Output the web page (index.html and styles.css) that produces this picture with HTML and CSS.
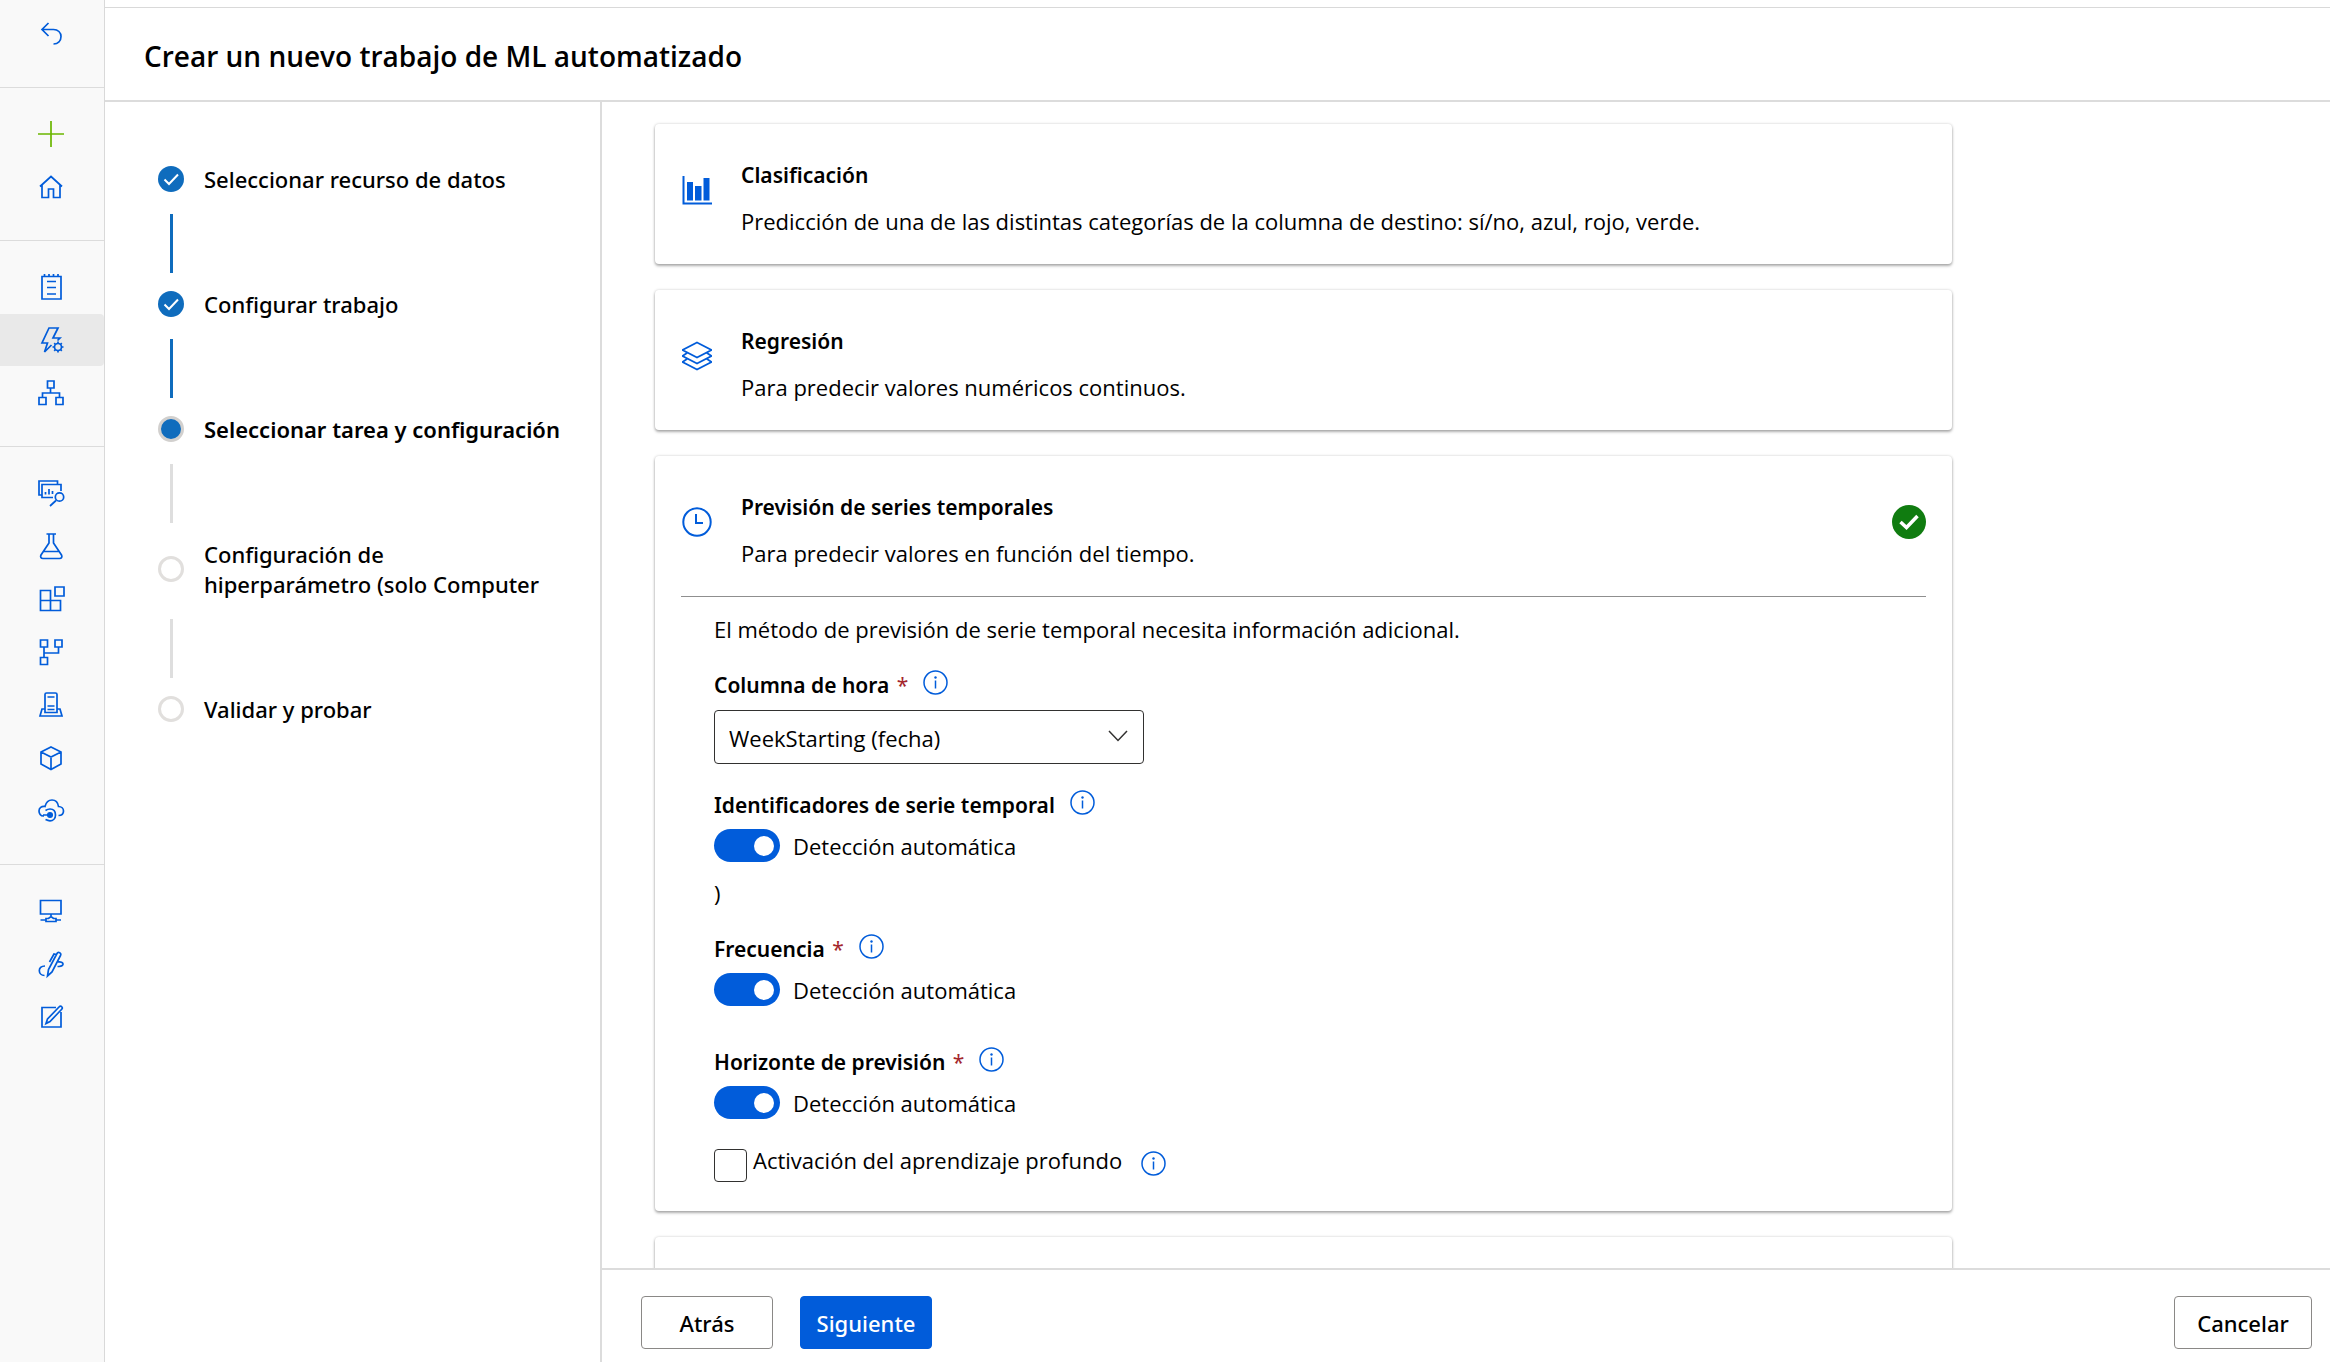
FILE: index.html
```
<!DOCTYPE html>
<html lang="es">
<head>
<meta charset="utf-8">
<meta name="viewport" content="width=device-width, initial-scale=1">
<title>Crear un nuevo trabajo de ML automatizado</title>
<link rel="stylesheet" href="styles.css">
</head>
<body>
<svg class="defs" aria-hidden="true">
  <symbol id="info" viewBox="0 0 25 25">
    <circle cx="12.5" cy="12.5" r="11.5" fill="none" stroke="currentColor" stroke-width="1.5"/>
    <path d="M12.5 10.5v8" fill="none" stroke="currentColor" stroke-width="1.5"/>
    <circle cx="12.5" cy="7.5" r="1.2" fill="currentColor"/>
  </symbol>
</svg>
<div class="app">
  <nav class="rail" aria-label="Navegación">
    <div class="rail-group rail-group-top">
      <a class="rail-item" href="#" aria-label="Volver"><svg viewBox="0 0 26 26"><path d="M10.500 2 L4 8.500 L10.500 15 M4 8.500 H15.500 C20 8.500 23 11.500 23 15.500 C23 20 20 23 15.500 23"/></svg></a>
    </div>
    <div class="rail-group">
      <a class="rail-item rail-item-new" href="#" aria-label="Nuevo"><svg viewBox="0 0 26 26"><path d="M13 0V26M0 13H26"/></svg></a>
      <a class="rail-item" href="#" aria-label="Inicio"><svg viewBox="0 0 26 26"><path d="M2 12.500 L13 2.500 L24 12.500 M4 11V23.500H10.500V15H15.500V23.500H22V11"/></svg></a>
    </div>
    <div class="rail-group">
      <a class="rail-item" href="#" aria-label="Cuadernos"><svg viewBox="0 0 26 26"><path d="M4 2.500H23V25H4ZM6.500 0V2.500M11 0V2.500M15.500 0V2.500M20 0V2.500M9 7.500H18M9 13.500H18M9 20H18"/></svg></a>
      <a class="rail-item rail-item-active" href="#" aria-label="ML automatizado" aria-current="page"><svg viewBox="0 0 26 26"><path d="M13.500 18 L6.500 25 L9.500 16 H4 L11 1 H20 L15 11 H22 L19.500 13.500"/><circle cx="20" cy="20" r="3.500"/><path d="M20 14.500V16.500M20 23.500V25.500M14.500 20H16.500M23.500 20H25.500M16.200 16.200L17.500 17.500M22.500 22.500L23.800 23.800M16.200 23.800L17.500 22.500M22.500 17.500L23.800 16.200"/></svg></a>
      <a class="rail-item" href="#" aria-label="Diseñador"><svg viewBox="0 0 26 26"><path d="M9.500 1H16V8H9.500ZM1 17.500H8V24.500H1ZM18 17.500H25V24.500H18ZM12.500 8V13M4.500 17.500V13H21.500V17.500"/></svg></a>
    </div>
    <div class="rail-group">
      <a class="rail-item" href="#" aria-label="Datos"><svg viewBox="0 0 26 26"><path d="M4 15H1V1H19.500V4M15 17.500H4V4.500H23V11M7.500 14.500V12M11 14.500V9M14.500 14V11M18 20.500L12 26"/><circle cx="21.500" cy="17" r="4.200"/></svg></a>
      <a class="rail-item" href="#" aria-label="Trabajos"><svg viewBox="0 0 26 26"><path d="M8.500 1H18M11 1V10L3 22C2 24 3 25.500 5 25.500H21.500C23.500 25.500 24.500 24 23.500 22L15.500 10V1M6 18.500H21"/></svg></a>
      <a class="rail-item" href="#" aria-label="Componentes"><svg viewBox="0 0 26 26"><path d="M2.500 4.500H12.500V24.500H2.500ZM2.500 14.500H22.500V24.500H12.500V14.500M17 1H26V10H17Z"/></svg></a>
      <a class="rail-item" href="#" aria-label="Canalizaciones"><svg viewBox="0 0 26 26"><path d="M2.500 1H9.500V8H2.500ZM17 1H24V8H17ZM2.500 18.500H9.500V25.500H2.500ZM6 8V18.500M6 14H20.500V8"/></svg></a>
      <a class="rail-item" href="#" aria-label="Entornos"><svg viewBox="0 0 26 26"><path d="M7 20.500V2.500Q7 1 8.500 1H17.500Q19 1 19 2.500V20.500ZM7 17H4L2 24H24L22 17H19M9.500 5H16.500M9.500 14H16.500M9.500 17.500H16.500"/></svg></a>
      <a class="rail-item" href="#" aria-label="Modelos"><svg viewBox="0 0 26 26"><path d="M13 2L23 7V19L13 24.500L3 19V7ZM3 7L13 12L23 7M13 12V24.500"/></svg></a>
      <a class="rail-item" href="#" aria-label="Puntos de conexión"><svg viewBox="0 0 26 26"><path d="M6 18H5.500C2.500 18 1 15.500 1 13C1 10 3.500 8 7 8.500C8 4.500 10.500 2 14 2C18 2 20 5 20.500 8.500C23.500 8.500 25.500 10.500 25.500 13C25.500 15.500 24 17.500 20.500 17.500M7.500 12.500C9 11.500 10 11 12 11C15.500 11 17.500 13.500 17.500 17C17.500 20.500 15 22.800 12 22.800C10 22.800 8.500 22 7.500 21.500M5 17H12"/><circle class="solid" cx="12" cy="17" r="2.200"/></svg></a>
    </div>
    <div class="rail-group">
      <a class="rail-item" href="#" aria-label="Proceso"><svg viewBox="0 0 26 26"><path d="M2.500 2.500H23V16H2.500ZM13 16V19M2.500 22H8M18 22H23M8 20.500H10.500L13 18.500L15.500 20.500H18V23.500H8Z"/></svg></a>
      <a class="rail-item" href="#" aria-label="Servicios vinculados"><svg viewBox="0 0 26 26"><path d="M9.500 25L10.500 18.500L19 2.500C20 .500 24 2 22.500 4.500L14 21ZM18.500 3.500L16 3L11.500 11M6.500 24.500C0 24.500 -1 15 7 15M20 11C26 10.500 27 15 21 15.500H19.500"/></svg></a>
      <a class="rail-item" href="#" aria-label="Etiquetado de datos"><svg viewBox="0 0 26 26"><path d="M18 3.500H4V23H23V8M8 19.500L9.500 15L21 3C23 1 25.500 3.500 23.500 5.500L12 17.500Z"/></svg></a>
    </div>
  </nav>

  <main class="main">
    <header class="header"><h1>Crear un nuevo trabajo de ML automatizado</h1></header>
    <div class="workspace">
      <ol class="steps">
        <li class="step step-done"><span class="marker"><svg viewBox="0 0 26 26"><path d="M6.500 13.500L11 18L20 8.500"/></svg></span><span>Seleccionar recurso de datos</span></li>
        <li class="step step-done"><span class="marker"><svg viewBox="0 0 26 26"><path d="M6.500 13.500L11 18L20 8.500"/></svg></span><span>Configurar trabajo</span></li>
        <li class="step step-current" aria-current="step"><span class="marker"></span><span>Seleccionar tarea y configuración</span></li>
        <li class="step"><span class="marker"></span><span>Configuración de<br>hiperparámetro (solo Computer</span></li>
        <li class="step"><span class="marker"></span><span>Validar y probar</span></li>
      </ol>

      <div class="content">
        <div class="cards">
          <section class="card">
            <div class="card-head">
              <svg class="card-icon" viewBox="0 0 30 30" aria-hidden="true"><path d="M1.500 1V28.500H30" fill="none" stroke="currentColor" stroke-width="2"/><path d="M5 7H11V25.500H5ZM13 11H19.500V25.500H13ZM21.500 3H27.500V25.500H21.500Z" fill="currentColor"/></svg>
              <div class="card-text"><h2>Clasificación</h2><p>Predicción de una de las distintas categorías de la columna de destino: sí/no, azul, rojo, verde.</p></div>
            </div>
          </section>
          <section class="card">
            <div class="card-head">
              <svg class="card-icon" viewBox="0 0 30 30" aria-hidden="true"><path d="M15 1.500L29.500 9L15 16.500L.500 9ZM5 12L.500 15L15 22.500L29.500 15L25 12M5 18L.500 21L15 28.500L29.500 21L25 18" fill="none" stroke="currentColor" stroke-width="1.800"/></svg>
              <div class="card-text"><h2>Regresión</h2><p>Para predecir valores numéricos continuos.</p></div>
            </div>
          </section>
          <section class="card card-selected">
            <div class="card-head">
              <svg class="card-icon" viewBox="0 0 30 30" aria-hidden="true"><circle cx="15" cy="15" r="13.700" fill="none" stroke="currentColor" stroke-width="2"/><path d="M14 7V16H21" fill="none" stroke="currentColor" stroke-width="2"/></svg>
              <div class="card-text"><h2>Previsión de series temporales</h2><p>Para predecir valores en función del tiempo.</p></div>
              <svg class="card-check" viewBox="0 0 34 34" role="img" aria-label="Seleccionado"><circle cx="17" cy="17" r="17" fill="#107c10"/><path d="M8.500 17L14.500 22.500L25.500 11" fill="none" stroke="#fff" stroke-width="3.500"/></svg>
            </div>
            <form class="settings">
              <p class="intro">El método de previsión de serie temporal necesita información adicional.</p>
              <div class="field">
                <div class="label-row"><label for="time-column">Columna de hora <span class="required">*</span></label><svg class="info"><use href="#info"/></svg></div>
                <div class="select-box">
                  <select id="time-column"><option>WeekStarting (fecha)</option></select>
                  <svg class="chevron" viewBox="0 0 20 14" aria-hidden="true"><path d="M1 2L10 11.500L19 2"/></svg>
                </div>
              </div>
              <div class="field">
                <div class="label-row"><span id="ids">Identificadores de serie temporal</span><svg class="info"><use href="#info"/></svg></div>
                <label class="toggle-row"><input class="toggle" type="checkbox" role="switch" aria-describedby="ids" checked>Detección automática</label>
                <p class="note">)</p>
              </div>
              <div class="field field-spaced">
                <div class="label-row"><span id="freq">Frecuencia <span class="required">*</span></span><svg class="info"><use href="#info"/></svg></div>
                <label class="toggle-row"><input class="toggle" type="checkbox" role="switch" aria-describedby="freq" checked>Detección automática</label>
              </div>
              <div class="field">
                <div class="label-row"><span id="horizon">Horizonte de previsión <span class="required">*</span></span><svg class="info"><use href="#info"/></svg></div>
                <label class="toggle-row"><input class="toggle" type="checkbox" role="switch" aria-describedby="horizon" checked>Detección automática</label>
              </div>
              <div class="check-row"><input class="check" type="checkbox" id="deep"><label for="deep">Activación del aprendizaje profundo</label><svg class="info"><use href="#info"/></svg></div>
            </form>
          </section>
          <section class="card"></section>
        </div>
        <footer class="footer">
          <button class="button" type="button">Atrás</button>
          <button class="button button-primary" type="button">Siguiente</button>
          <button class="button button-cancel" type="button">Cancelar</button>
        </footer>
      </div>
    </div>
  </main>
</div>
</body>
</html>
```
FILE: styles.css
```
:root {
  --blue: #015cda;
  --line: #d9d9d9;
  --strong: "Noto Sans", "Open Sans", sans-serif;
}

* { box-sizing: border-box; }

body {
  margin: 0;
  background: #fff;
  color: #000;
  font: 400 22px/30px "Open Sans", "Noto Sans", sans-serif;
}

h1, h2, p, ol { margin: 0; padding: 0; }

.defs { position: absolute; width: 0; height: 0; }

.app { display: flex; height: 100vh; overflow: hidden; }

/* Icon rail */
.rail {
  flex: none;
  width: 105px;
  background: #f9f9f9;
  border-right: 1px solid var(--line);
}

.rail-group {
  display: flex;
  flex-direction: column;
  gap: 1px;
  padding: 20px 0 27px;
  border-top: 1px solid #dcdcdc;
}

.rail-group-top { padding-top: 8px; border-top: 0; }

.rail-item {
  display: flex;
  align-items: center;
  justify-content: center;
  height: 52px;
  padding-right: 3px;
  color: var(--blue);
}

.rail-item-new { color: #6bb700; }
.rail-item-active { background: #e9e9e9; border-radius: 0 4px 4px 0; }

.rail-item svg {
  width: 26px;
  height: 26px;
  overflow: visible;
  fill: none;
  stroke: currentColor;
  stroke-width: 1.7;
}

.rail-item .solid { fill: currentColor; }

/* Header */
.main { flex: 1; min-width: 0; display: flex; flex-direction: column; padding-top: 7px; }

.header {
  padding: 28px 39px 24px;
  border-top: 1px solid var(--line);
  border-bottom: 2px solid #dcdcdc;
}

.header h1 { font: 600 28px/40px "Open Sans", "Noto Sans", sans-serif; }

.workspace { flex: 1; min-height: 0; display: flex; }

/* Wizard steps */
.steps {
  flex: none;
  width: 497px;
  padding: 62px 20px 0 53px;
  border-right: 2px solid #dcdcdc;
  list-style: none;
  font-family: var(--strong);
  font-weight: 500;
}

.step { display: grid; grid-template-columns: 26px 1fr; column-gap: 20px; align-items: center; }

.step:not(:last-child)::after {
  content: "";
  width: 3px;
  height: 59px;
  margin: 20px 0 16px;
  justify-self: center;
  background: #dedede;
}

.step-done:not(:last-child)::after { background: #0f6cbd; }

.marker { width: 26px; height: 26px; border: 3px solid #e1dfdd; border-radius: 50%; }

.step-done .marker { border: 0; background: #0f6cbd; }
.step-done svg { display: block; fill: none; stroke: #fff; stroke-width: 2; }

.step-current { font-weight: 600; }
.step-current .marker { border-color: #d2d0ce; background: #0f6cbd; }

/* Task cards */
.content { flex: 1; min-width: 0; display: flex; flex-direction: column; }

.cards {
  flex: 1;
  min-height: 0;
  display: flex;
  flex-direction: column;
  gap: 26px;
  padding: 22px 53px 0;
  overflow: hidden;
}

.card {
  flex: none;
  width: 100%;
  max-width: 1297px;
  min-height: 140px;
  padding: 0 26px;
  border-radius: 4px;
  box-shadow: 0 2px 3px rgba(0, 0, 0, .3), 0 0 3px rgba(0, 0, 0, .18);
}

.card-head { display: flex; padding: 36px 0 28px; }
.card-icon { flex: none; width: 30px; height: 30px; margin: 15px 29px 0 1px; color: var(--blue); }
.card-text { flex: 1; display: grid; gap: 16px; }
.card-text h2 { font: 600 21px/30px var(--strong); }
.card-check { flex: none; width: 34px; height: 34px; margin-top: 13px; }

/* Forecast settings */
.settings { padding: 17px 33px 29px; border-top: 1px solid #8f8f8f; }

.field { padding-bottom: 26px; }
.field-spaced { padding-bottom: 41px; }
.intro { padding-bottom: 26px; }

.label-row {
  display: flex;
  gap: 15px;
  align-items: flex-start;
  font: 600 21px/30px var(--strong);
}

.required { padding-left: 2px; color: #a4262c; font-weight: 400; }
.info { flex: none; width: 25px; height: 25px; color: var(--blue); }

.select-box { position: relative; width: 430px; margin-top: 10px; }

.select-box select {
  display: block;
  width: 100%;
  height: 54px;
  padding: 2px 40px 0 14px;
  border: 1px solid #323130;
  border-radius: 4px;
  appearance: none;
  background: #fff;
  color: #000;
  font: inherit;
}

.chevron {
  position: absolute;
  right: 16px;
  top: 19px;
  width: 20px;
  height: 14px;
  fill: none;
  stroke: #323130;
  stroke-width: 1.5;
  pointer-events: none;
}

.toggle-row { display: flex; gap: 13px; align-items: center; padding-top: 9px; }

.toggle {
  flex: none;
  display: flex;
  align-items: center;
  justify-content: flex-end;
  width: 66px;
  height: 33px;
  margin: 0;
  padding-right: 6px;
  border-radius: 17px;
  appearance: none;
  background: var(--blue);
}

.toggle::before { content: ""; width: 20px; height: 20px; border-radius: 50%; background: #fff; }

.note { padding-top: 16px; }

.check-row { display: flex; gap: 6px; }

.check {
  flex: none;
  width: 33px;
  height: 33px;
  margin: 4px 0 0;
  border: 1px solid #323130;
  border-radius: 4px;
  appearance: none;
  background: #fff;
}

.check-row .info { margin: 6px 0 0 13px; }

/* Footer */
.footer {
  flex: none;
  display: flex;
  gap: 27px;
  padding: 26px 18px 13px 39px;
  border-top: 2px solid #dcdcdc;
}

.button {
  min-width: 132px;
  height: 53px;
  padding: 0 15px;
  border: 1px solid #8a8886;
  border-radius: 4px;
  background: #fff;
  color: #000;
  font: 500 22px/30px var(--strong);
}

.button-primary { border-color: var(--blue); background: var(--blue); color: #fff; }
.button-cancel { min-width: 138px; margin-left: auto; }
```
